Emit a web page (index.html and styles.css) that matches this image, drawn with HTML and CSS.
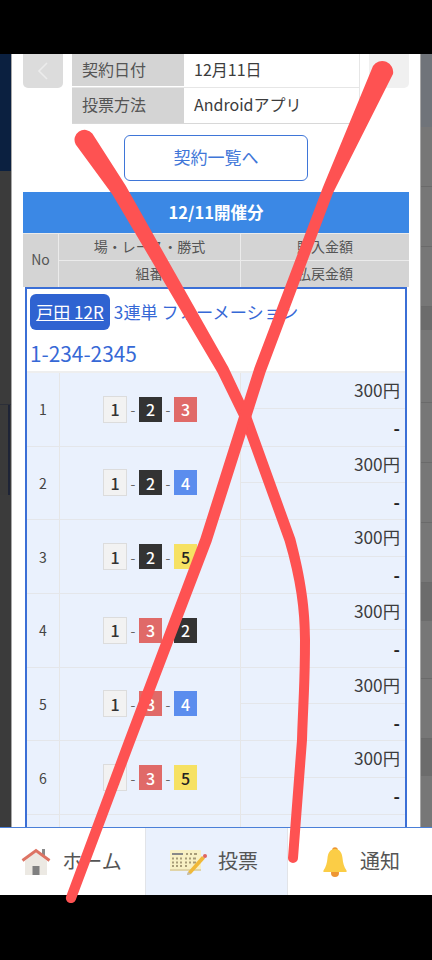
FILE: index.html
```html
<!DOCTYPE html>
<html lang="ja">
<head>
<meta charset="utf-8">
<title>契約詳細</title>
<link rel="stylesheet" href="styles.css">
</head>
<body>
<div class="screen">
  <div class="black-top"></div>
  <main class="stage">
    <div class="strip strip-left">
      <div class="band navy"></div>
      <div class="band dark-a"></div>
      <div class="band dark-b"></div>
    </div>
    <section class="modal">
      <div class="top-row">
        <button class="side-btn prev" aria-label="前へ">
          <svg viewBox="0 0 12 20" width="12" height="20"><path d="M10 2 2 10l8 8" fill="none" stroke="#ececec" stroke-width="1.6"/></svg>
        </button>
        <div class="info">
          <div class="info-row first"><div class="info-label">契約日付</div><div class="info-value">12月11日</div></div>
          <div class="info-row"><div class="info-label">投票方法</div><div class="info-value">Androidアプリ</div></div>
        </div>
        <button class="side-btn next" aria-label="次へ"></button>
      </div>
      <div class="link-row"><a class="list-link">契約一覧へ</a></div>
      <h2 class="day-title">12/11開催分</h2>
      <div class="thead">
        <div class="th th-no">No</div>
        <div class="th">場・レース・勝式</div>
        <div class="th">購入金額</div>
        <div class="th">組番</div>
        <div class="th">払戻金額</div>
      </div>
      <div class="bet">
        <div class="bet-head">
          <p class="bet-line"><a class="venue">戸田 12R</a> 3連単 フォーメーション</p>
          <p class="bet-combo">1-234-2345</p>
        </div>
        <div class="row">
          <div class="no">1</div>
          <div class="combo"><span class="n n1">1</span><i>-</i><span class="n n2">2</span><i>-</i><span class="n n3">3</span></div>
          <div class="amounts"><div class="amt">300円</div><div class="pay">-</div></div>
        </div>
        <div class="row">
          <div class="no">2</div>
          <div class="combo"><span class="n n1">1</span><i>-</i><span class="n n2">2</span><i>-</i><span class="n n4">4</span></div>
          <div class="amounts"><div class="amt">300円</div><div class="pay">-</div></div>
        </div>
        <div class="row">
          <div class="no">3</div>
          <div class="combo"><span class="n n1">1</span><i>-</i><span class="n n2">2</span><i>-</i><span class="n n5">5</span></div>
          <div class="amounts"><div class="amt">300円</div><div class="pay">-</div></div>
        </div>
        <div class="row">
          <div class="no">4</div>
          <div class="combo"><span class="n n1">1</span><i>-</i><span class="n n3">3</span><i>-</i><span class="n n2">2</span></div>
          <div class="amounts"><div class="amt">300円</div><div class="pay">-</div></div>
        </div>
        <div class="row">
          <div class="no">5</div>
          <div class="combo"><span class="n n1">1</span><i>-</i><span class="n n3">3</span><i>-</i><span class="n n4">4</span></div>
          <div class="amounts"><div class="amt">300円</div><div class="pay">-</div></div>
        </div>
        <div class="row">
          <div class="no">6</div>
          <div class="combo"><span class="n n1">1</span><i>-</i><span class="n n3">3</span><i>-</i><span class="n n5">5</span></div>
          <div class="amounts"><div class="amt">300円</div><div class="pay">-</div></div>
        </div>
        <div class="row">
          <div class="no"></div>
          <div class="combo"></div>
          <div class="amounts"><div class="amt"></div><div class="pay"></div></div>
        </div>
      </div>
    </section>
    <div class="strip strip-right">
      <div class="rb rb-top"></div>
      <div class="rb h60"></div>
      <div class="rb h60"></div>
      <div class="rb h60"></div>
      <div class="rb dim h23"></div>
      <div class="rb h73"></div>
      <div class="rb h60"></div>
      <div class="rb h60"></div>
      <div class="rb h60"></div>
      <div class="rb dim h38"></div>
      <div class="rb h58"></div>
      <div class="rb h60"></div>
      <div class="rb dim h37"></div>
      <div class="rb"></div>
    </div>
  </main>
  <nav class="nav">
    <a class="tab">
      <svg class="ico" viewBox="0 0 30 28" width="30" height="28">
        <rect x="21" y="1" width="3" height="8" fill="#8a8a8a"/>
        <path d="M4 13 15 4l11 9v14H4z" fill="#ece9e3"/>
        <rect x="11.500" y="18" width="7" height="9" fill="#808080"/>
        <path d="M1.500 12.500 15 2.500l13.500 10" fill="none" stroke="#dd7464" stroke-width="3"/>
      </svg>
      <span>ホーム</span>
    </a>
    <a class="tab active">
      <svg class="ico" viewBox="0 0 38 26" width="38" height="26">
        <rect x="1" y="1" width="31" height="20" rx="1" fill="#f8f0c4"/>
        <rect x="1" y="20" width="31" height="2" fill="#e0d4a8"/>
        <rect x="3" y="4" width="11" height="2" fill="#888"/>
        <path d="M17 5h2m2 0h2m2 0h3M3 9.500h2m2 0h2m2 0h2m3 0h2m2 0h2m2 0h3M3 13.500h2m2 0h2m2 0h2m3 0h2m2 0h2m2 0h3M3 17h2m2 0h2m2 0h2m3 0h2" stroke="#a89c78" stroke-width="2" fill="none"/>
        <path d="M19 23 33 7l3 2.500L22 25l-4 1z" fill="#f0b93a"/>
        <path d="M18 26l1-3 3 2z" fill="#bbb"/>
        <circle cx="36" cy="7" r="2" fill="#e0655f"/>
      </svg>
      <span>投票</span>
    </a>
    <a class="tab tab-bell">
      <svg class="ico" viewBox="0 0 24 30" width="24" height="30">
        <circle cx="12" cy="3" r="2.800" fill="#ee9632"/>
        <circle cx="12" cy="26" r="4" fill="#ee9632"/>
        <path d="M12 2c5 0 7 4 7.500 9 .4 5 1.500 9 4 12.500.5 1 0 1.500-1 1.500H1.500c-1 0-1.500-.5-1-1.500C3 20 4.100 16 4.500 11 5 6 7 2 12 2z" fill="#fbcd46"/>
      </svg>
      <span>通知</span>
    </a>
  </nav>
  <div class="black-bottom"></div>
  <svg class="scribble" viewBox="0 0 432 960" width="432" height="960" aria-hidden="true">
    <path fill="#fe5252" d="M75.700 144.500 L112.400 194.400 L217.800 373 L241 420.400 L284.700 541.400 C296 580 300 610 300 640 C300 680 298 710 297 740 L288 858 A5 5 0 0 0 298 858 L307 740 C308 710 310 680 310 640 C310 610 306 580 295.300 538.600 L251 415.600 L228.200 367 L125.600 185.600 L92.300 133.500 A10 10 0 0 0 75.700 144.500 Z"/>
    <path fill="#fe5252" d="M373 66 L323 187 L254.500 367.600 L200.500 538 L125 738 L66.300 896 A5 5 0 0 0 75.700 900 L135 742 L211.500 542 L265.500 372.400 L333 193 L393 74 A11 11 0 0 0 373 66 Z"/>
  </svg>
</div>
</body>
</html>
```

FILE: styles.css
```css
* { box-sizing: border-box; }
html, body { margin: 0; padding: 0; background: #000; }
body { font-family: "Noto Sans CJK JP", "Noto Sans", sans-serif; color: #444; }
p, h2 { margin: 0; }

.screen { position: relative; width: 432px; height: 960px; display: flex; flex-direction: column; overflow: hidden; }
.black-top { flex: 0 0 54px; background: #000; }
.black-bottom { flex: 0 0 65px; background: #000; }
.stage { flex: 1 1 auto; min-height: 0; display: flex; overflow: hidden; }

.strip { flex: 0 0 11px; display: flex; flex-direction: column; }
.strip-left { background: #3b3b3b; }
.band.navy { height: 117px; background: #0b2040; }
.band.dark-a { height: 234px; background: #3b3b3b; border-bottom: 1px solid #2c2f38; }
.band.dark-b { height: 90px; background: linear-gradient(to right, #3a3a3a 8px, #1e2436 8px, #1e2436 10px, #3a3a3a 10px); }

.strip-right { background: #777; }
.rb { background: #777; border-bottom: 1px solid #6a6a6a; flex: 0 0 auto; }
.rb:last-child { flex: 1 1 auto; border-bottom: 0; }
.rb-top { height: 73px; background: #70747a; border-bottom: 0; }
.h60 { height: 60px; }
.h73 { height: 73px; }
.h58 { height: 58px; }
.h23 { height: 23px; }
.h38 { height: 38px; }
.h37 { height: 37px; }
.rb.dim { background: #6c6c6c; border-bottom: 0; }

.modal { flex: 0 0 410px; background: #fff; border-left: 1px solid #a8a8a8; border-right: 1px solid #a8a8a8; padding: 0 11px; min-width: 0; }

.top-row { display: flex; gap: 9px; align-items: flex-start; }
.side-btn { flex: 0 0 40px; height: 34px; border: 0; padding: 0; border-radius: 0 0 5px 5px; background: #f0f0f0; display: flex; align-items: center; justify-content: center; }
.side-btn.prev { background: #dcdcdc; }
.info { flex: 0 0 288px; border-right: 1px solid #e6e6e6; border-bottom: 1px solid #d8d8d8; }
.info-row { display: flex; height: 36px; border-top: 1px solid #e6e6e6; }
.info-row.first { height: 32px; border-top: 0; margin-bottom: 1px; }
.info-label { flex: 0 0 112px; background: #d4d4d4; padding: 0 0 3px 10px; font-size: 16px; line-height: 1; display: flex; align-items: center; color: #555; }
.info-value { flex: 1; padding: 0 0 3px 10px; font-size: 16px; display: flex; align-items: center; color: #3c3c3c; }

.link-row { display: flex; justify-content: center; padding-top: 11px; }
.list-link { width: 184px; height: 46px; border: 1.500px solid #3f76d8; border-radius: 6px; padding-bottom: 3px; display: flex; align-items: center; justify-content: center; font-size: 17px; color: #3f76d8; }

.day-title { margin-top: 11px; height: 41px; padding-bottom: 2px; background: #3b88e5; color: #fff; font-size: 16.500px; font-weight: 700; display: flex; align-items: center; justify-content: center; }

.thead { display: grid; grid-template-columns: 35px 182px 1fr; grid-template-rows: 27px 27px; background: #d4d4d4; }
.th { display: flex; align-items: center; justify-content: center; padding-bottom: 3px; font-size: 14px; color: #555; border-left: 1.500px solid #ebebeb; border-top: 1px solid #ebebeb; }
.th-no { grid-row: span 2; border-left: 0; }

.bet { margin: 0 2px; border: 2px solid #3b6fd6; border-bottom: 0; background: #fff; height: 600px; }
.bet-head { height: 84px; padding: 5px 3px 0; color: #3668d6; border-bottom: 2px solid #eee; }
.bet-line { font-size: 17.200px; line-height: 36px; height: 36px; white-space: nowrap; }
.venue { display: inline-block; width: 80px; height: 36px; border-radius: 6px; background: #2f63d1; color: #fff; text-decoration: underline; text-align: center; font-size: 17px; line-height: 36px; }
.bet-combo { margin-top: 5px; font-size: 20.800px; line-height: 36px; }

.row { display: grid; grid-template-columns: 32px 182px 1fr; height: 73.670px; background: #eaf1fd; border-bottom: 1.500px solid #e4e6ea; }
.no { display: flex; align-items: center; justify-content: center; font-size: 14px; color: #444; }
.combo { display: flex; align-items: center; justify-content: center; border-left: 1.500px solid #e6e6e6; border-right: 1.500px solid #e6e6e6; }
.combo i { font-style: normal; font-size: 14px; color: #666; width: 12px; text-align: center; }
.n { width: 23px; height: 25px; display: flex; align-items: center; justify-content: center; font-size: 16px; font-weight: 500; }
.n1 { width: 24px; background: #f2f2f2; border: 1px solid #dcdcdc; color: #333; height: 27px; }
.n2 { background: #333; color: #fff; }
.n3 { background: #e06a68; color: #fff; }
.n4 { background: #5b8dee; color: #fff; }
.n5 { background: #f6e163; color: #222; }
.amounts { display: flex; flex-direction: column; }
.amt, .pay { flex: 1 1 50%; display: flex; align-items: center; justify-content: flex-end; padding-right: 5px; font-size: 17.300px; color: #3c3c3c; }
.amt { border-bottom: 1.500px solid #e4e6ea; padding-bottom: 2px; }
.pay { font-weight: 700; color: #222; }

.nav { flex: 0 0 68px; display: grid; grid-template-columns: 145px 143px 1fr; background: #fff; border-top: 1px solid #4a7fd8; }
.tab { display: flex; align-items: center; justify-content: center; gap: 11px; font-size: 20px; color: #555; }
.tab span { padding-bottom: 3px; }
.tab:first-child { padding-right: 2px; }
.tab.active { background: #eaf1fd; border-left: 1px solid #e2e4e8; border-right: 1px solid #e2e4e8; padding-right: 6px; }
.tab-bell { padding-left: 3px; gap: 13px; }
.ico { flex: 0 0 auto; }

.scribble { position: absolute; left: 0; top: 0; pointer-events: none; }
```
